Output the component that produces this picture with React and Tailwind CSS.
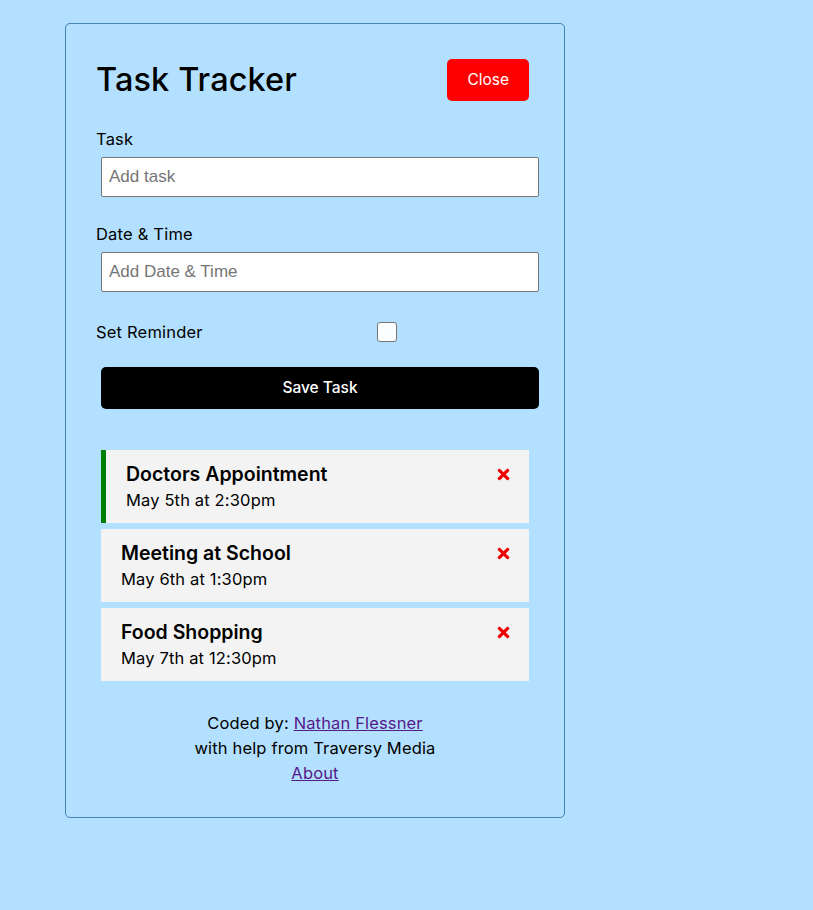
import React from "react";
import { FaTimes } from "react-icons/fa";

const tasks = [
  { id: 1, text: "Doctors Appointment", day: "May 5th at 2:30pm", reminder: true },
  { id: 2, text: "Meeting at School", day: "May 6th at 1:30pm", reminder: false },
  { id: 3, text: "Food Shopping", day: "May 7th at 12:30pm", reminder: false },
];

const inputCls =
  "block w-full h-[40px] m-[5px] px-[7px] py-[3px] bg-white border border-[#767676] rounded-[2px] text-[17px] placeholder:text-[#757575] outline-none";

export default function App() {
  return (
    <div
      className="min-h-screen bg-[#b3e0fe] pt-[23px] pl-[65px] text-black"
      style={{ fontFamily: "Inter, 'Noto Sans', sans-serif" }}
    >
      <div className="w-[500px] border border-[#4682b4] rounded-[5px] pt-[30px] px-[30px] pb-[31px]">
        <header className="flex items-center justify-between mb-[21px]">
          <h1 className="text-[32.5px] font-medium leading-[48px] tracking-[0.1px]">Task Tracker</h1>
          <button className="m-[5px] h-[42px] px-[20px] rounded-[5px] bg-[#ff0000] text-white text-[15.5px]">
            Close
          </button>
        </header>

        <form className="flex flex-col">
          <div className="flex flex-col">
            <label className="block text-[16.5px] leading-[25px] tracking-[0.2px]">Task</label>
            <input
              type="text"
              placeholder="Add task"
              className={inputCls}
              style={{ fontFamily: "'Liberation Sans', Arial, sans-serif" }}
            />
          </div>
          <div className="mt-[20px] flex flex-col">
            <label className="block text-[16.5px] leading-[25px] tracking-[0.2px]">Date &amp; Time</label>
            <input
              type="text"
              placeholder="Add Date & Time"
              className={inputCls}
              style={{ fontFamily: "'Liberation Sans', Arial, sans-serif" }}
            />
          </div>
          <div className="mt-[20px] flex items-center justify-between h-[30px]">
            <label className="flex-1 text-[16.5px] leading-[25px] tracking-[0.2px]">Set Reminder</label>
            <div className="flex-[2] flex justify-center">
              <span className="block w-[20px] h-[20px] bg-[#fbfdff] border border-[#767676] rounded-[3px] -ml-[3px]" />
            </div>
          </div>
          <button
            type="button"
            className="block w-full mt-[20px] mx-[5px] h-[42px] rounded-[5px] bg-black text-white text-[15.5px] font-medium"
          >
            Save Task
          </button>
        </form>

        <div className="mt-[41px] flex flex-col gap-[6px] mx-[5px]">
          {tasks.map((t) => (
            <div
              key={t.id}
              className={`bg-[#f3f3f3] py-[10px] px-[20px] ${t.reminder ? "border-l-[5px] border-[#008000]" : ""}`}
            >
              <h3 className="flex items-center justify-between text-[19.5px] font-semibold leading-[28px]">
                {t.text}
                <FaTimes className="text-[#ee0000] -mr-[3px]" style={{ fontSize: "17px" }} />
              </h3>
              <p className="text-[16.5px] leading-[25px] tracking-[0.15px]">{t.day}</p>
            </div>
          ))}
        </div>

        <footer className="mt-[30px] text-center text-[16.5px] leading-[25px] tracking-[0.15px]">
          <p>
            Coded by: <a href="#" className="underline text-[#551a8b]">Nathan Flessner</a>
          </p>
          <p>with help from Traversy Media</p>
          <a href="#" className="underline text-[#551a8b]">About</a>
        </footer>
      </div>
    </div>
  );
}
